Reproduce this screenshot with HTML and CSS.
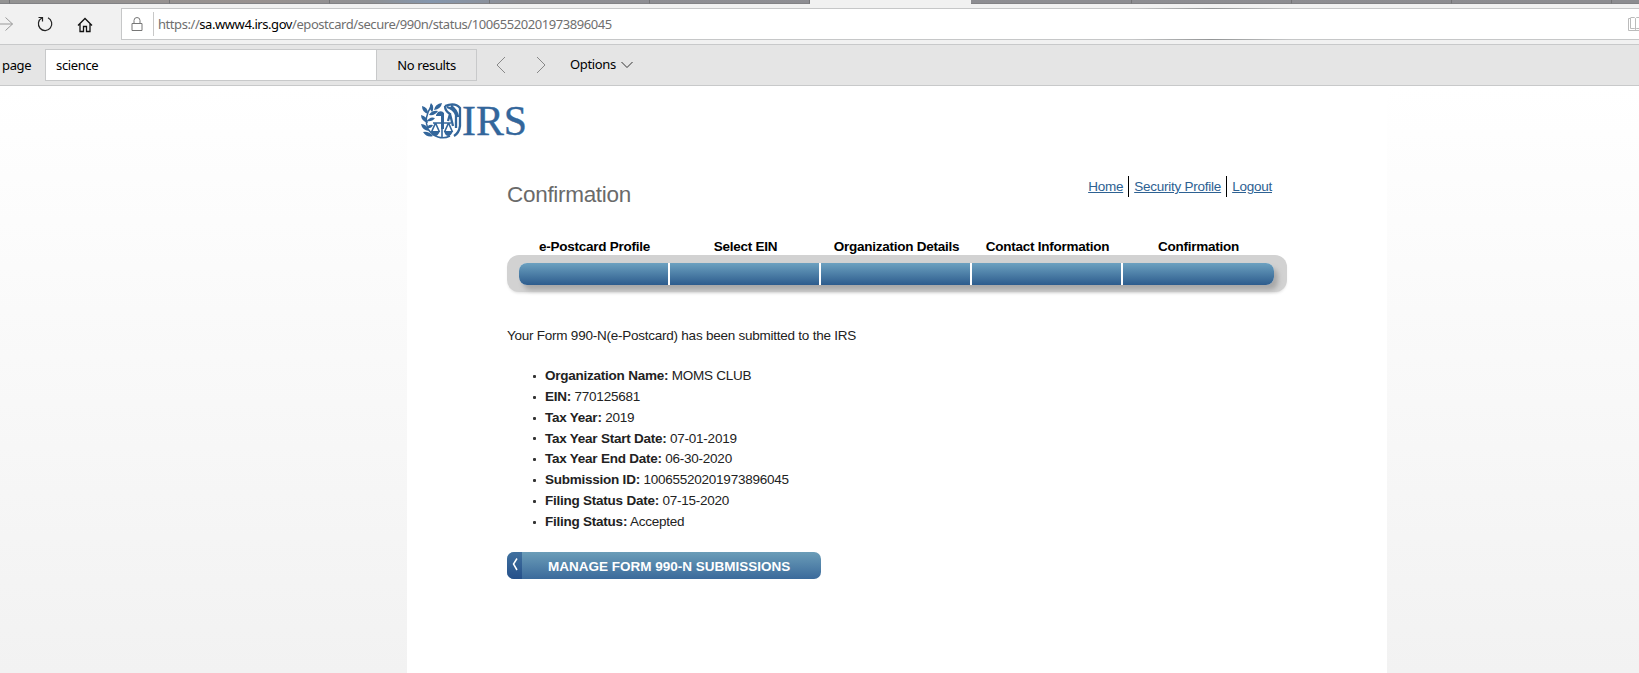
FILE: index.html
```html
<!DOCTYPE html>
<html lang="en">
<head>
<meta charset="utf-8">
<title>Confirmation</title>
<link rel="stylesheet" href="styles.css">
</head>
<body>
<div class="tabs"><i class="t1"></i><i></i><i></i><i></i><i></i><i></i><i class="active"></i><i></i><i></i><i></i><i></i><i></i></div>
<div class="nav">
  <svg class="ic-fwd" width="14" height="16" viewBox="0 0 14 16"><path d="M0 8H12.500M5.500 1.500L12.500 8L5.500 14.500" fill="none" stroke="#999"/></svg>
  <svg class="ic-reload" width="16" height="16" viewBox="0 0 16 16"><path d="M11 1.800A6.700 6.700 0 1 1 4.800 2M1.500 1.500H5.500V5.500" fill="none" stroke="#222" stroke-width="1.200"/></svg>
  <svg class="ic-home" width="16" height="16" viewBox="0 0 16 16"><path d="M1 8.500L8 1.500L15 8.500M3 7V14.500H6.500V9.500H9.500V14.500H13V7" fill="none" stroke="#111" stroke-width="1.300"/></svg>
  <div class="address">
    <svg class="ic-lock" width="12" height="15" viewBox="0 0 12 15"><path d="M1 6.500H11V13.500H1ZM3 6.500V3.500A3 3 0 0 1 9 3.500V6.500" fill="none" stroke="#777"/></svg>
    <span class="sep"></span>
    <span class="url">https://<b>sa.www4.irs.gov</b>/epostcard/secure/990n/status/10065520201973896045</span>
    <svg class="ic-book" width="11" height="15" viewBox="0 0 11 15"><path d="M2.500 1.500H.5V13.500H11M2.500 1V11.500H6.500L7.500 12.500M2.500 .5H6.500L7.500 1.500V12.500M7.500 1.500L8.500 .5H11M7.500 12.500L8.500 11.500H11" fill="none" stroke="#bbb"/></svg>
  </div>
</div>
<div class="find">
  <span class="find-label">page</span>
  <div class="find-box"><span class="find-input"><span>science</span></span><span class="find-result"><span>No results</span></span></div>
  <svg class="ic-prev" width="10" height="18" viewBox="0 0 10 18"><path d="M9 1L1 9L9 17" fill="none" stroke="#888"/></svg>
  <svg class="ic-next" width="10" height="18" viewBox="0 0 10 18"><path d="M1 1L9 9L1 17" fill="none" stroke="#888"/></svg>
  <span class="options">Options</span>
  <svg class="ic-down" width="12" height="8" viewBox="0 0 12 8"><path d="M.5 1L6 6.500L11.500 1" fill="none" stroke="#333"/></svg>
</div>
<div class="page">
  <div class="sheet">
    <svg class="logo" width="112" height="42" viewBox="0 0 112 42">
      <g fill="#33669b">
        <path d="M2 4Q8 5 8 12Q2 10 2 4ZM1 13Q7 14 8 21Q1 19 1 13ZM1 22Q7 22 9 29Q2 28 1 22ZM11 1Q15 5 12 10Q8 6 11 1ZM22 1Q21 7 14 8Q15 2 22 1ZM18 9Q15 14 9 13Q12 8 18 9ZM15 16Q12 20 7 19Q10 14 15 16ZM13 23Q11 27 7 26Q8 22 13 23ZM3 30Q9 29 13 34Q7 36 3 30Z"/>
        <path d="M16 13L18 10Q22 8 24 11V27H21V14L16 14Z"/>
        <path d="M11 29H20Q18 34 15.500 34Q12 34 11 29ZM24 29H33Q31 34 28.500 34Q25 34 24 29Z"/>
      </g>
      <g fill="none" stroke="#33669b">
        <path d="M12 3Q3 16 8 27Q12 33 18 35Q24 37 30 34" stroke-width="1.500"/>
        <path d="M13 21H31M15.500 21L11.500 30M15.500 21L19.500 30M28.500 21L24.500 30M28.500 21L32.500 30M22 25V35" stroke-width="1.600"/>
        <path d="M25 4Q35 0 40 6V24Q39 31 34 34M25 4Q25 9 30 12L28 19M27 5Q34 7 36 13V26M30 12L33 24M31 4Q37 8 38 15" stroke-width="2.300"/>
      </g>
      <text class="logo-text" x="42" y="33" textLength="65" lengthAdjust="spacingAndGlyphs">IRS</text>
    </svg>
    <div class="content">
      <div class="heading">
        <h1>Confirmation</h1>
        <div class="links"><a>Home</a><a>Security Profile</a><a>Logout</a></div>
      </div>
      <div class="steps"><span>e-Postcard Profile</span><span>Select EIN</span><span>Organization Details</span><span>Contact Information</span><span>Confirmation</span></div>
      <div class="track"><div class="bar"><i></i><i></i><i></i><i></i><i></i></div></div>
      <p class="message">Your Form 990-N(e-Postcard) has been submitted to the IRS</p>
      <ul class="details">
        <li><b>Organization Name:</b> MOMS CLUB</li>
        <li><b>EIN:</b> 770125681</li>
        <li><b>Tax Year:</b> 2019</li>
        <li><b>Tax Year Start Date:</b> 07-01-2019</li>
        <li><b>Tax Year End Date:</b> 06-30-2020</li>
        <li><b>Submission ID:</b> 10065520201973896045</li>
        <li><b>Filing Status Date:</b> 07-15-2020</li>
        <li><b>Filing Status:</b> Accepted</li>
      </ul>
      <div class="button"><span class="back"><svg width="6" height="14" viewBox="0 0 6 14"><path d="M5 .5L1.500 6L5 12" fill="none" stroke="#fff" stroke-width="1.500"/></svg></span><span class="button-text">MANAGE FORM 990-N SUBMISSIONS</span></div>
    </div>
  </div>
</div>
</body>
</html>
```
FILE: styles.css
```css
* { box-sizing: border-box; }
body { margin: 0; width: 1639px; height: 673px; overflow: hidden; display: flex; flex-direction: column; background: #fff; font-family: "Liberation Sans", Arial, sans-serif; }
svg { display: block; flex: none; }
.tabs { height: 4px; flex: none; display: flex; overflow: hidden; background: linear-gradient(90deg, #939393 0, #98918f 260px, #8f9093 370px, #8496ad 430px, #8e8e93 520px, #8c8c90); }
.tabs i { flex: none; width: 160.100px; border-right: 1px solid #747476; border-bottom: 1px solid #828285; }
.tabs .t1 { width: 10px; }
.tabs .active { width: 161px; background: #f1f1f1; border: 0; }
.nav { height: 40px; flex: none; display: flex; align-items: flex-start; background: #f1f1f1; font-family: "Noto Sans", "Open Sans", sans-serif; }
.ic-fwd { margin-top: 12px; }
.ic-reload { margin: 12px 0 0 23px; }
.ic-home { margin: 13px 0 0 24px; }
.address { margin: 4px 0 0 28px; flex: 1; height: 32px; background: #fff; border: 1px solid #c6c7c8; border-right: 0; display: flex; align-items: center; position: relative; }
.address::before, .address::after { content: ""; position: absolute; left: 1010px; width: 160px; height: 1px; background: linear-gradient(90deg, #c6c7c8, #939596 50%, #c6c7c8); top: -1px; }
.address::after { top: 30px; }
.ic-lock { margin-left: 9px; }
.sep { width: 1px; height: 24px; background: #c8c8c8; margin-left: 10px; }
.url { margin-left: 4px; font-size: 13px; color: #6f6f6f; white-space: nowrap; letter-spacing: -.435px; }
.url b { font-weight: 400; color: #000; }
.ic-book { margin-left: auto; }
.find { height: 42px; flex: none; display: flex; align-items: center; background: #e5e5e5; border: solid #c8c9ca; border-width: 1px 0; font: 13px "Noto Sans", "Open Sans", sans-serif; color: #000; letter-spacing: -.35px; }
.find-label { width: 29px; margin-left: 2px; }
.find-box { width: 432px; height: 32px; margin-left: 14px; border: 1px solid #c8c9ca; display: flex; }
.find-input { width: 331px; background: #fff; border-right: 1px solid #c8c9ca; padding-left: 10px; display: flex; align-items: center; }
.find-result { flex: 1; display: flex; align-items: center; justify-content: center; }
.ic-prev { margin-left: 19px; }
.ic-next { margin-left: 30px; }
.options { margin: -2px 0 0 24px; }
.ic-down { margin-left: 5px; }
.page { flex: 1; background: linear-gradient(#fff, #f2f2f2); display: flex; justify-content: center; padding-left: 155px; }
.sheet { width: 980px; background: #fff; }
.logo { margin: 16px 0 0 13px; overflow: visible; }
.logo-text { font: 43px "Liberation Serif", serif; fill: #33669b; stroke: #33669b; stroke-width: .4px; }
.content { margin: 31px 0 0 100px; width: 780px; font-size: 13.500px; letter-spacing: -.24px; color: #222; }
.heading { height: 50px; display: flex; align-items: flex-start; justify-content: space-between; }
h1 { font-size: 22.500px; line-height: 26px; font-weight: 400; letter-spacing: -.3px; color: #6a6a6a; margin: 7px 0 0; }
.links { display: flex; margin: 1px 15px 0 0; }
.links a { height: 21px; line-height: 21px; color: #2d6192; text-decoration: underline; padding: 0 5px; }
.links a + a { border-left: 1px solid #000; }
.links a:last-child { padding-right: 0; }
.steps { display: flex; margin: 14px 13px 1px 12px; font-weight: 700; color: #000; line-height: 15px; }
.steps span { flex: 1; text-align: center; }
.track { height: 37px; background: #d2d2d2; border-radius: 12px; padding: 8px 13px 0 12px; box-shadow: 0 2px 3px -1px #ddd; }
.bar { height: 22px; display: flex; gap: 2px; background: #fff; border-radius: 8px; box-shadow: 4px 5px 5px #a8a8a8; }
.bar i { flex: none; width: 149px; background: linear-gradient(#6ca1c0, #2d5c8d); }
.bar i:first-child { border-radius: 8px 0 0 8px; }
.bar i:last-child { flex: 1; border-radius: 0 8px 8px 0; }
.message { margin: 36px 0 0; line-height: 15px; }
.details { list-style: none; margin: 23px 0 0 25px; padding: 0; }
.details li { line-height: 20.850px; display: flex; align-items: center; white-space: pre; }
.details li::before { content: ""; width: 3px; height: 3px; border-radius: 1px; background: #333; margin: 0 9px 0 1px; }
.button { height: 27px; width: 314px; margin-top: 19px; border-radius: 7px; overflow: hidden; display: flex; background: linear-gradient(#6b9db8, #3b6a9b); color: #fff; font-weight: 700; letter-spacing: 0; }
.back { width: 15px; display: flex; align-items: center; justify-content: center; background: linear-gradient(#41719f, #25508a); }
.button-text { line-height: 29px; margin-left: 26px; white-space: nowrap; }
```
